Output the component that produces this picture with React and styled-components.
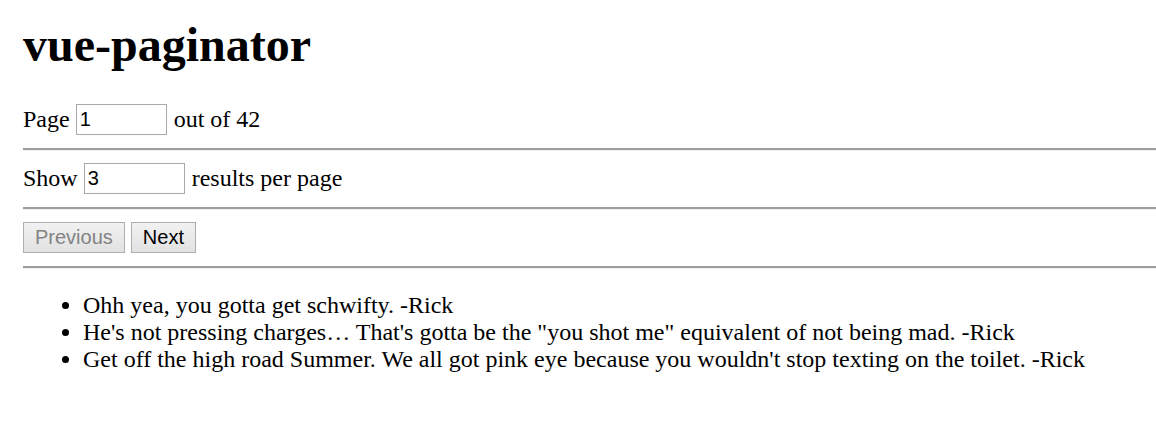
import React, { useState } from "react";
import styled, { createGlobalStyle } from "styled-components";

const GlobalStyle = createGlobalStyle`
  body {
    margin: 0;
    background: #fff;
    color: #000;
    font-family: "Liberation Serif", "Times New Roman", serif;
  }
`;

const Page = styled.div`
  padding-left: 23px;
  font-size: 24px;
  line-height: 27px;
`;

const Title = styled.h1`
  font-size: 48px;
  font-weight: 700;
  line-height: normal;
  margin: 17px 0 32px;
`;

const Row = styled.div`
  display: flex;
  align-items: center;
  gap: 6px;
  height: 31px;
`;

const Field = styled.input`
  box-sizing: border-box;
  width: ${(p) => p.$width}px;
  height: 31px;
  margin: 0 1px 0 0;
  padding: 1px 3px;
  border: 1px solid #a9a9a9;
  border-radius: 0;
  font-family: "Liberation Sans", Arial, sans-serif;
  font-size: 20px;
  color: #000;
  outline: none;
`;

const Rule = styled.hr`
  height: 0;
  margin: 13px 0 12px;
  border: none;
  border-top: 2px solid #9e9e9e;
  border-bottom: 1px solid #eeeeee;
`;

const Button = styled.button`
  box-sizing: border-box;
  height: 31px;
  padding: 0 11px;
  border: 1px solid #adadad;
  border-radius: 0;
  background: linear-gradient(#f1f1f1, #e2e2e2);
  font-family: "Liberation Sans", Arial, sans-serif;
  font-size: 20px;
  color: #000;

  &:disabled {
    color: #838383;
  }
`;

const Quotes = styled.ul`
  margin: 23px 0 0;
  padding-left: 60px;
  list-style: disc;
`;

const quotes = [
  "Ohh yea, you gotta get schwifty. -Rick",
  "He's not pressing charges\u2026 That's gotta be the \"you shot me\" equivalent of not being mad. -Rick",
  "Get off the high road Summer. We all got pink eye because you wouldn't stop texting on the toilet. -Rick",
];

function App() {
  const [page, setPage] = useState("1");
  const [perPage, setPerPage] = useState("3");

  return (
    <Page>
      <GlobalStyle />
      <Title>vue-paginator</Title>
      <Row>
        <span>Page</span>
        <Field $width={91} value={page} onChange={(e) => setPage(e.target.value)} />
        <span>out of 42</span>
      </Row>
      <Rule />
      <Row>
        <span>Show</span>
        <Field $width={101} value={perPage} onChange={(e) => setPerPage(e.target.value)} />
        <span>results per page</span>
      </Row>
      <Rule />
      <Row>
        <Button disabled>Previous</Button>
        <Button>Next</Button>
      </Row>
      <Rule />
      <Quotes>
        {quotes.map((q) => (
          <li key={q}>{q}</li>
        ))}
      </Quotes>
    </Page>
  );
}

export default App;
